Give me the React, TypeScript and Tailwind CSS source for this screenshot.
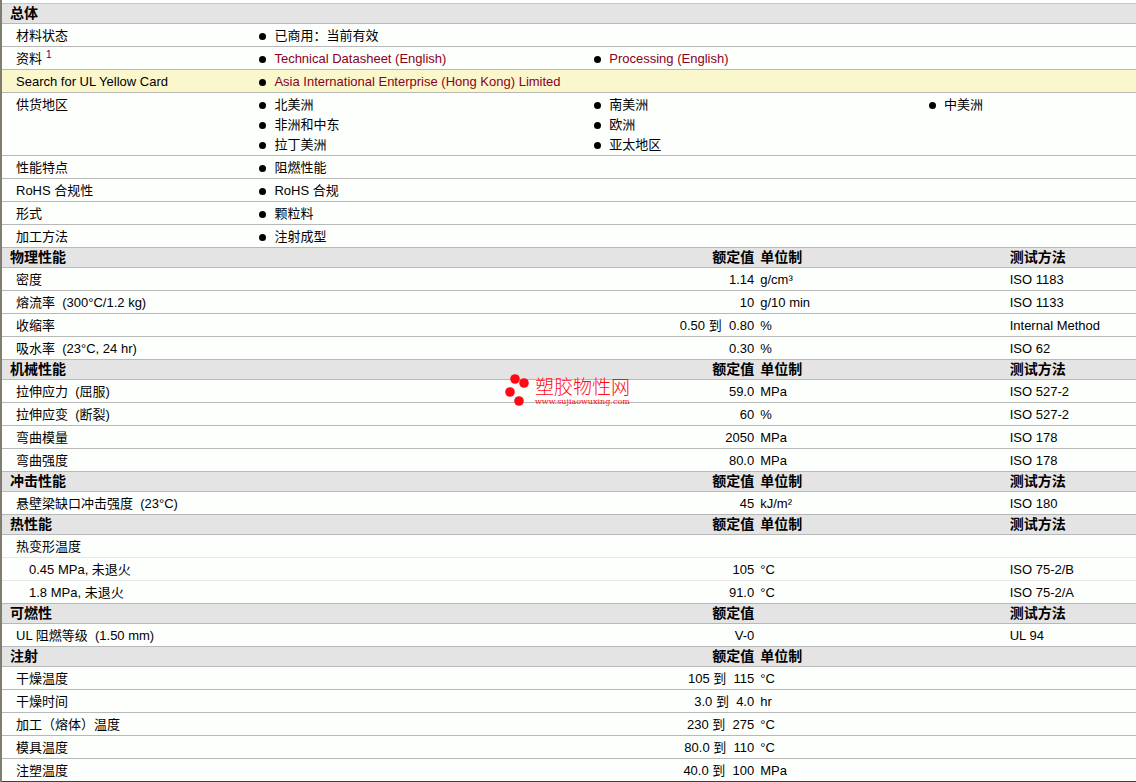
import { Fragment } from "react";

interface BulletItem {
  text: string;
  href?: string;
}

interface GeneralRow {
  label: string;
  note?: string;
  highlight?: boolean;
  items: BulletItem[];
}

interface PropertyRow {
  label: string;
  condition?: string;
  value?: string;
  unit?: string;
  method?: string;
  nested?: boolean;
  border?: "soft" | "end";
}

interface PropertySection {
  title: string;
  hasUnit: boolean;
  hasMethod: boolean;
  rows: PropertyRow[];
}

const GENERAL_ROWS: GeneralRow[] = [
  { label: "材料状态", items: [{ text: "已商用：当前有效" }] },
  {
    label: "资料",
    note: "1",
    items: [
      { text: "Technical Datasheet (English)", href: "#datasheet" },
      { text: "Processing (English)", href: "#processing" },
    ],
  },
  {
    label: "Search for UL Yellow Card",
    highlight: true,
    items: [
      { text: "Asia International Enterprise (Hong Kong) Limited", href: "#yellow-card" },
    ],
  },
  {
    label: "供货地区",
    items: [
      { text: "北美洲" },
      { text: "南美洲" },
      { text: "中美洲" },
      { text: "非洲和中东" },
      { text: "欧洲" },
      { text: "" },
      { text: "拉丁美洲" },
      { text: "亚太地区" },
    ],
  },
  { label: "性能特点", items: [{ text: "阻燃性能" }] },
  { label: "RoHS 合规性", items: [{ text: "RoHS 合规" }] },
  { label: "形式", items: [{ text: "颗粒料" }] },
  { label: "加工方法", items: [{ text: "注射成型" }] },
];

const SECTIONS: PropertySection[] = [
  {
    title: "物理性能",
    hasUnit: true,
    hasMethod: true,
    rows: [
      { label: "密度", value: "1.14", unit: "g/cm³", method: "ISO 1183" },
      { label: "熔流率", condition: "(300°C/1.2 kg)", value: "10", unit: "g/10 min", method: "ISO 1133" },
      { label: "收缩率", value: "0.50 到  0.80", unit: "%", method: "Internal Method" },
      { label: "吸水率", condition: "(23°C, 24 hr)", value: "0.30", unit: "%", method: "ISO 62" },
    ],
  },
  {
    title: "机械性能",
    hasUnit: true,
    hasMethod: true,
    rows: [
      { label: "拉伸应力", condition: "(屈服)", value: "59.0", unit: "MPa", method: "ISO 527-2" },
      { label: "拉伸应变", condition: "(断裂)", value: "60", unit: "%", method: "ISO 527-2" },
      { label: "弯曲模量", value: "2050", unit: "MPa", method: "ISO 178" },
      { label: "弯曲强度", value: "80.0", unit: "MPa", method: "ISO 178" },
    ],
  },
  {
    title: "冲击性能",
    hasUnit: true,
    hasMethod: true,
    rows: [
      { label: "悬壁梁缺口冲击强度", condition: "(23°C)", value: "45", unit: "kJ/m²", method: "ISO 180" },
    ],
  },
  {
    title: "热性能",
    hasUnit: true,
    hasMethod: true,
    rows: [
      { label: "热变形温度", border: "soft" },
      { label: "0.45 MPa, 未退火", value: "105", unit: "°C", method: "ISO 75-2/B", nested: true, border: "soft" },
      { label: "1.8 MPa, 未退火", value: "91.0", unit: "°C", method: "ISO 75-2/A", nested: true },
    ],
  },
  {
    title: "可燃性",
    hasUnit: false,
    hasMethod: true,
    rows: [{ label: "UL 阻燃等级", condition: "(1.50 mm)", value: "V-0", method: "UL 94" }],
  },
  {
    title: "注射",
    hasUnit: true,
    hasMethod: false,
    rows: [
      { label: "干燥温度", value: "105 到  115", unit: "°C" },
      { label: "干燥时间", value: "3.0 到  4.0", unit: "hr" },
      { label: "加工（熔体）温度", value: "230 到  275", unit: "°C" },
      { label: "模具温度", value: "80.0 到  110", unit: "°C" },
      { label: "注塑温度", value: "40.0 到  100", unit: "MPa", border: "end" },
    ],
  },
];

const HEADER_ROW =
  "bg-[#e4e4e4] text-left text-sm leading-[19px] [&>*]:border-b [&>*]:border-[#b8b8b8] [&>*]:p-0";

const ROW_BORDERS = {
  normal: "[&>td]:border-[#b8b8b8]",
  soft: "[&>td]:border-[#e8e8e8]",
  end: "[&>td]:border-[#b00828]",
};

const BulletList = ({ items }: { items: BulletItem[] }) => (
  <ul className="grid grid-cols-[38.2%_38.2%_1fr]">
    {items.map((item, index) =>
      item.text ? (
        <li key={item.text} className="flex items-center gap-2 whitespace-nowrap">
          <span className="size-[7px] rounded-full bg-black" aria-hidden="true" />
          {item.href ? (
            <a href={item.href} className="text-[#8c0020]">
              {item.text}
            </a>
          ) : (
            item.text
          )}
        </li>
      ) : (
        <li key={index} aria-hidden="true" />
      ),
    )}
  </ul>
);

const GeneralTable = () => (
  <table className="w-full table-fixed border-separate border-spacing-0 border-t border-[#c8c8c8]">
    <colgroup>
      <col className="w-[22.7%]" />
      <col />
    </colgroup>
    <thead>
      <tr className={HEADER_ROW}>
        <th colSpan={2}>
          <span className="pl-2">总体</span>
        </th>
      </tr>
    </thead>
    <tbody>
      {GENERAL_ROWS.map((row) => (
        <tr
          key={row.label}
          className={`align-top [&>td]:border-b [&>td]:border-[#b8b8b8] [&>td]:pt-[2px] ${
            row.highlight ? "bg-[#fbf7cd]" : ""
          }`}
        >
          <td className="pl-3.5">
            {row.label}
            {row.note ? <sup className="ml-1 text-[10px] leading-none text-[#3c0064]">{row.note}</sup> : null}
          </td>
          <td>
            <BulletList items={row.items} />
          </td>
        </tr>
      ))}
    </tbody>
  </table>
);

const PropertyTable = () => (
  <table className="w-full table-fixed border-separate border-spacing-0">
    <colgroup>
      <col className="w-[44.6%]" />
      <col className="w-[22%]" />
      <col className="w-[22%]" />
      <col />
    </colgroup>
    <tbody>
      {SECTIONS.map((section) => (
        <Fragment key={section.title}>
          <tr className={HEADER_ROW}>
            <th>
              <span className="pl-2">{section.title}</span>
            </th>
            <th className="text-right">
              <span className="pr-[3px]">额定值</span>
            </th>
            <th>
              <span className="pl-[3px]">{section.hasUnit ? "单位制" : ""}</span>
            </th>
            <th>
              <span className="pl-[3px]">{section.hasMethod ? "测试方法" : ""}</span>
            </th>
          </tr>
          {section.rows.map((row) => (
            <tr
              key={row.label}
              className={`whitespace-pre [&>td]:border-b [&>td]:pt-[2px] ${ROW_BORDERS[row.border ?? "normal"]}`}
            >
              <td className={row.nested ? "pl-[27px]" : "pl-3.5"}>
                {row.label}
                {row.condition ? `  ${row.condition}` : ""}
              </td>
              <td className="pr-[3px] text-right">{row.value}</td>
              <td className="pl-[3px]">{row.unit}</td>
              <td className="pl-[3px]">{row.method}</td>
            </tr>
          ))}
        </Fragment>
      ))}
    </tbody>
  </table>
);

const Watermark = () => (
  <svg
    className="pointer-events-none absolute top-[372px] left-[44.2%]"
    width="130"
    height="36"
    viewBox="0 0 130 36"
    role="img"
    aria-label="塑胶物性网"
  >
    <g fill="#ff0a14">
      <circle cx="12" cy="7" r="4.8" />
      <circle cx="21" cy="11" r="4.8" />
      <circle cx="7" cy="20" r="4.8" />
      <circle cx="16" cy="29" r="4.8" />
      <text
        x="32"
        y="22"
        fontSize="19"
        fontWeight="300"
        fontFamily="Liberation Sans, Noto Sans CJK SC, sans-serif"
      >
        塑胶物性网
      </text>
      <text x="32" y="32" fontSize="8" fontFamily="DejaVu Serif, serif">
        www.sujiaowuxing.com
      </text>
    </g>
  </svg>
);

export default function App() {
  return (
    <main className="relative border-l-2 border-[#807c70] bg-[#fdfffd] pt-[3px] font-['Liberation_Sans','Noto_Sans_CJK_SC',sans-serif] text-[13px] leading-5 text-black">
      <GeneralTable />
      <PropertyTable />
      <Watermark />
    </main>
  );
}
